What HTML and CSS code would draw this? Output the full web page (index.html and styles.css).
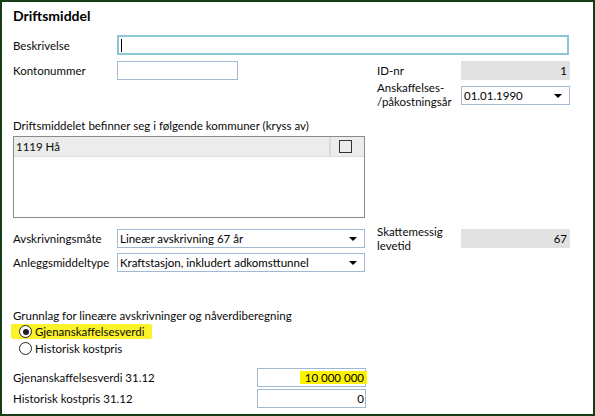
FILE: index.html
```html
<!DOCTYPE html>
<html lang="no">
<head>
<meta charset="utf-8">
<title>Driftsmiddel</title>
<link rel="stylesheet" href="styles.css">
</head>
<body>
<div class="window">
  <div class="title">Driftsmiddel</div>

  <div class="row r-besk">
    <div class="lbl">Beskrivelse</div>
    <div class="field focus wide"><span class="caret"></span></div>
  </div>

  <div class="row r-konto">
    <div class="lbl">Kontonummer</div>
    <div class="field konto"></div>
    <div class="gap-konto"></div>
    <div class="lbl2">ID-nr</div>
    <div class="ro">1</div>
  </div>

  <div class="row r-ansk">
    <div class="left-spacer"></div>
    <div class="lbl2 two"><span class="ln">Anskaffelses-</span><span class="ln">/påkostningsår</span></div>
    <div class="field select small">01.01.1990<span class="arrow"></span></div>
  </div>

  <div class="section-lbl kommuner">Driftsmiddelet befinner seg i følgende kommuner (kryss av)</div>

  <div class="list">
    <div class="list-row">
      <div class="list-name">1119 Hå</div>
      <div class="list-check"><span class="checkbox"></span></div>
    </div>
  </div>

  <div class="row r-avskr">
    <div class="lbl">Avskrivningsmåte</div>
    <div class="field select mid">Lineær avskrivning 67 år<span class="arrow"></span></div>
    <div class="lbl2 two up"><span class="ln">Skattemessig</span><span class="ln">levetid</span></div>
    <div class="ro">67</div>
  </div>

  <div class="row r-anlegg">
    <div class="lbl">Anleggsmiddeltype</div>
    <div class="field select mid">Kraftstasjon, inkludert adkomsttunnel<span class="arrow"></span></div>
  </div>

  <div class="section-lbl grunnlag">Grunnlag for lineære avskrivninger og nåverdiberegning</div>

  <div class="radio-row hl">
    <span class="radio checked"></span><span class="radio-text">Gjenanskaffelsesverdi</span>
  </div>
  <div class="radio-row plain">
    <span class="radio"></span><span class="radio-text">Historisk kostpris</span>
  </div>

  <div class="row r-gjen">
    <div class="lbl long">Gjenanskaffelsesverdi 31.12</div>
    <div class="field num"><span class="mark">10 000 000</span></div>
  </div>

  <div class="row r-hist">
    <div class="lbl long">Historisk kostpris 31.12</div>
    <div class="field num">0</div>
  </div>
</div>
</body>
</html>
```

FILE: styles.css
```css
* { box-sizing: border-box; }
html, body { margin: 0; padding: 0; background: #fff; }
body {
  font-family: Lato, "Noto Sans", "Liberation Sans", sans-serif;
  font-size: 11.5px;
  color: #0a0a0a;
}
.window {
  width: 595px;
  height: 416px;
  border: 2px solid #153d15;
  padding: 0 0 0 11px;
  overflow: hidden;
}
.title {
  margin-top: 4px;
  height: 20px;
  line-height: 20px;
  font-size: 14px;
  font-weight: bold;
  color: #000;
}
.row {
  display: flex;
  align-items: center;
  height: 19px;
}
.lbl { width: 104px; line-height: 15px; white-space: nowrap; }
.lbl.long { width: 244px; }
.lbl2 { width: 84px; line-height: 15px; white-space: nowrap; }
.lbl2.two { display: flex; flex-direction: column; }
.lbl2.two .ln { display: block; height: 14px; line-height: 14px; }
.lbl2.up { align-self: flex-start; margin-top: -4px; }
.field {
  height: 19px;
  border: 1px solid #a3b8d2;
  background: #fff;
  line-height: 17px;
  padding: 0 2px;
  white-space: nowrap;
  position: relative;
  color: #000;
}
.r-besk { margin-top: 9px; height: 20px; }
.field.focus {
  height: 20px;
  border: 2px solid #8cc7d5;
}
.field.wide { width: 452px; }
.caret {
  display: inline-block;
  width: 1px;
  height: 13px;
  background: #000;
  margin-top: 2px;
}
.r-konto { margin-top: 6px; }
.field.konto { width: 121px; }
.gap-konto { width: 139px; }
.ro {
  width: 109px;
  height: 19px;
  background: #e1e1e1;
  text-align: right;
  line-height: 19px;
  padding-right: 3px;
  color: #000;
}
.r-ansk { margin-top: 1px; height: 28px; }
.left-spacer { width: 364px; }
.field.small { width: 109px; }
.field.mid { width: 248px; margin-right: 12px; }
.field.select { padding-right: 20px; }
.arrow {
  position: absolute;
  right: 7px;
  top: 7px;
  width: 0;
  height: 0;
  border-left: 4px solid transparent;
  border-right: 4px solid transparent;
  border-top: 4px solid #000;
}
.section-lbl { line-height: 15px; height: 15px; }
.kommuner { margin-top: 9px; }
.list {
  margin-top: 3px;
  width: 352px;
  height: 82px;
  border: 1px solid #8a8a8a;
}
.list-row {
  display: flex;
  height: 20px;
  background: #ececec;
  border-bottom: 1px solid #dedede;
}
.list-name { flex: 1; padding-left: 2px; line-height: 19px; }
.list-check {
  width: 35px;
  border-left: 2px solid #dadada;
  display: flex;
  align-items: center;
  justify-content: center;
}
.checkbox {
  display: block;
  width: 13px;
  height: 13px;
  border: 1.5px solid #333;
  margin-left: -4px;
}
.r-avskr { margin-top: 11px; }
.r-anlegg { margin-top: 5px; }
.grunnlag { margin-top: 36px; }
.radio-row {
  display: flex;
  align-items: center;
  height: 17px;
}
.radio-row.hl {
  width: 141px;
  margin-left: -2px;
  padding-left: 8px;
  background: #fbf22a;
  border-radius: 2px;
  height: 15px;
  margin-top: 1px;
  margin-bottom: 1px;
}
.radio-row.plain { padding-left: 6px; }
.radio {
  width: 13px;
  height: 13px;
  border: 1px solid #222;
  border-radius: 50%;
  background: #fff;
  position: relative;
  margin-right: 3px;
  flex: none;
}
.radio.checked::after {
  content: "";
  position: absolute;
  left: 2.5px;
  top: 2.5px;
  width: 6px;
  height: 6px;
  border-radius: 50%;
  background: #222;
}
.r-gjen { margin-top: 11px; }
.r-hist { margin-top: 2px; }
.field.num { width: 109px; text-align: right; padding-right: 1px; }
.mark {
  background: #fdf200;
  display: inline-block;
  line-height: 13px;
  padding: 0 3px 0 5px;
  margin-right: -3px;
}
```
